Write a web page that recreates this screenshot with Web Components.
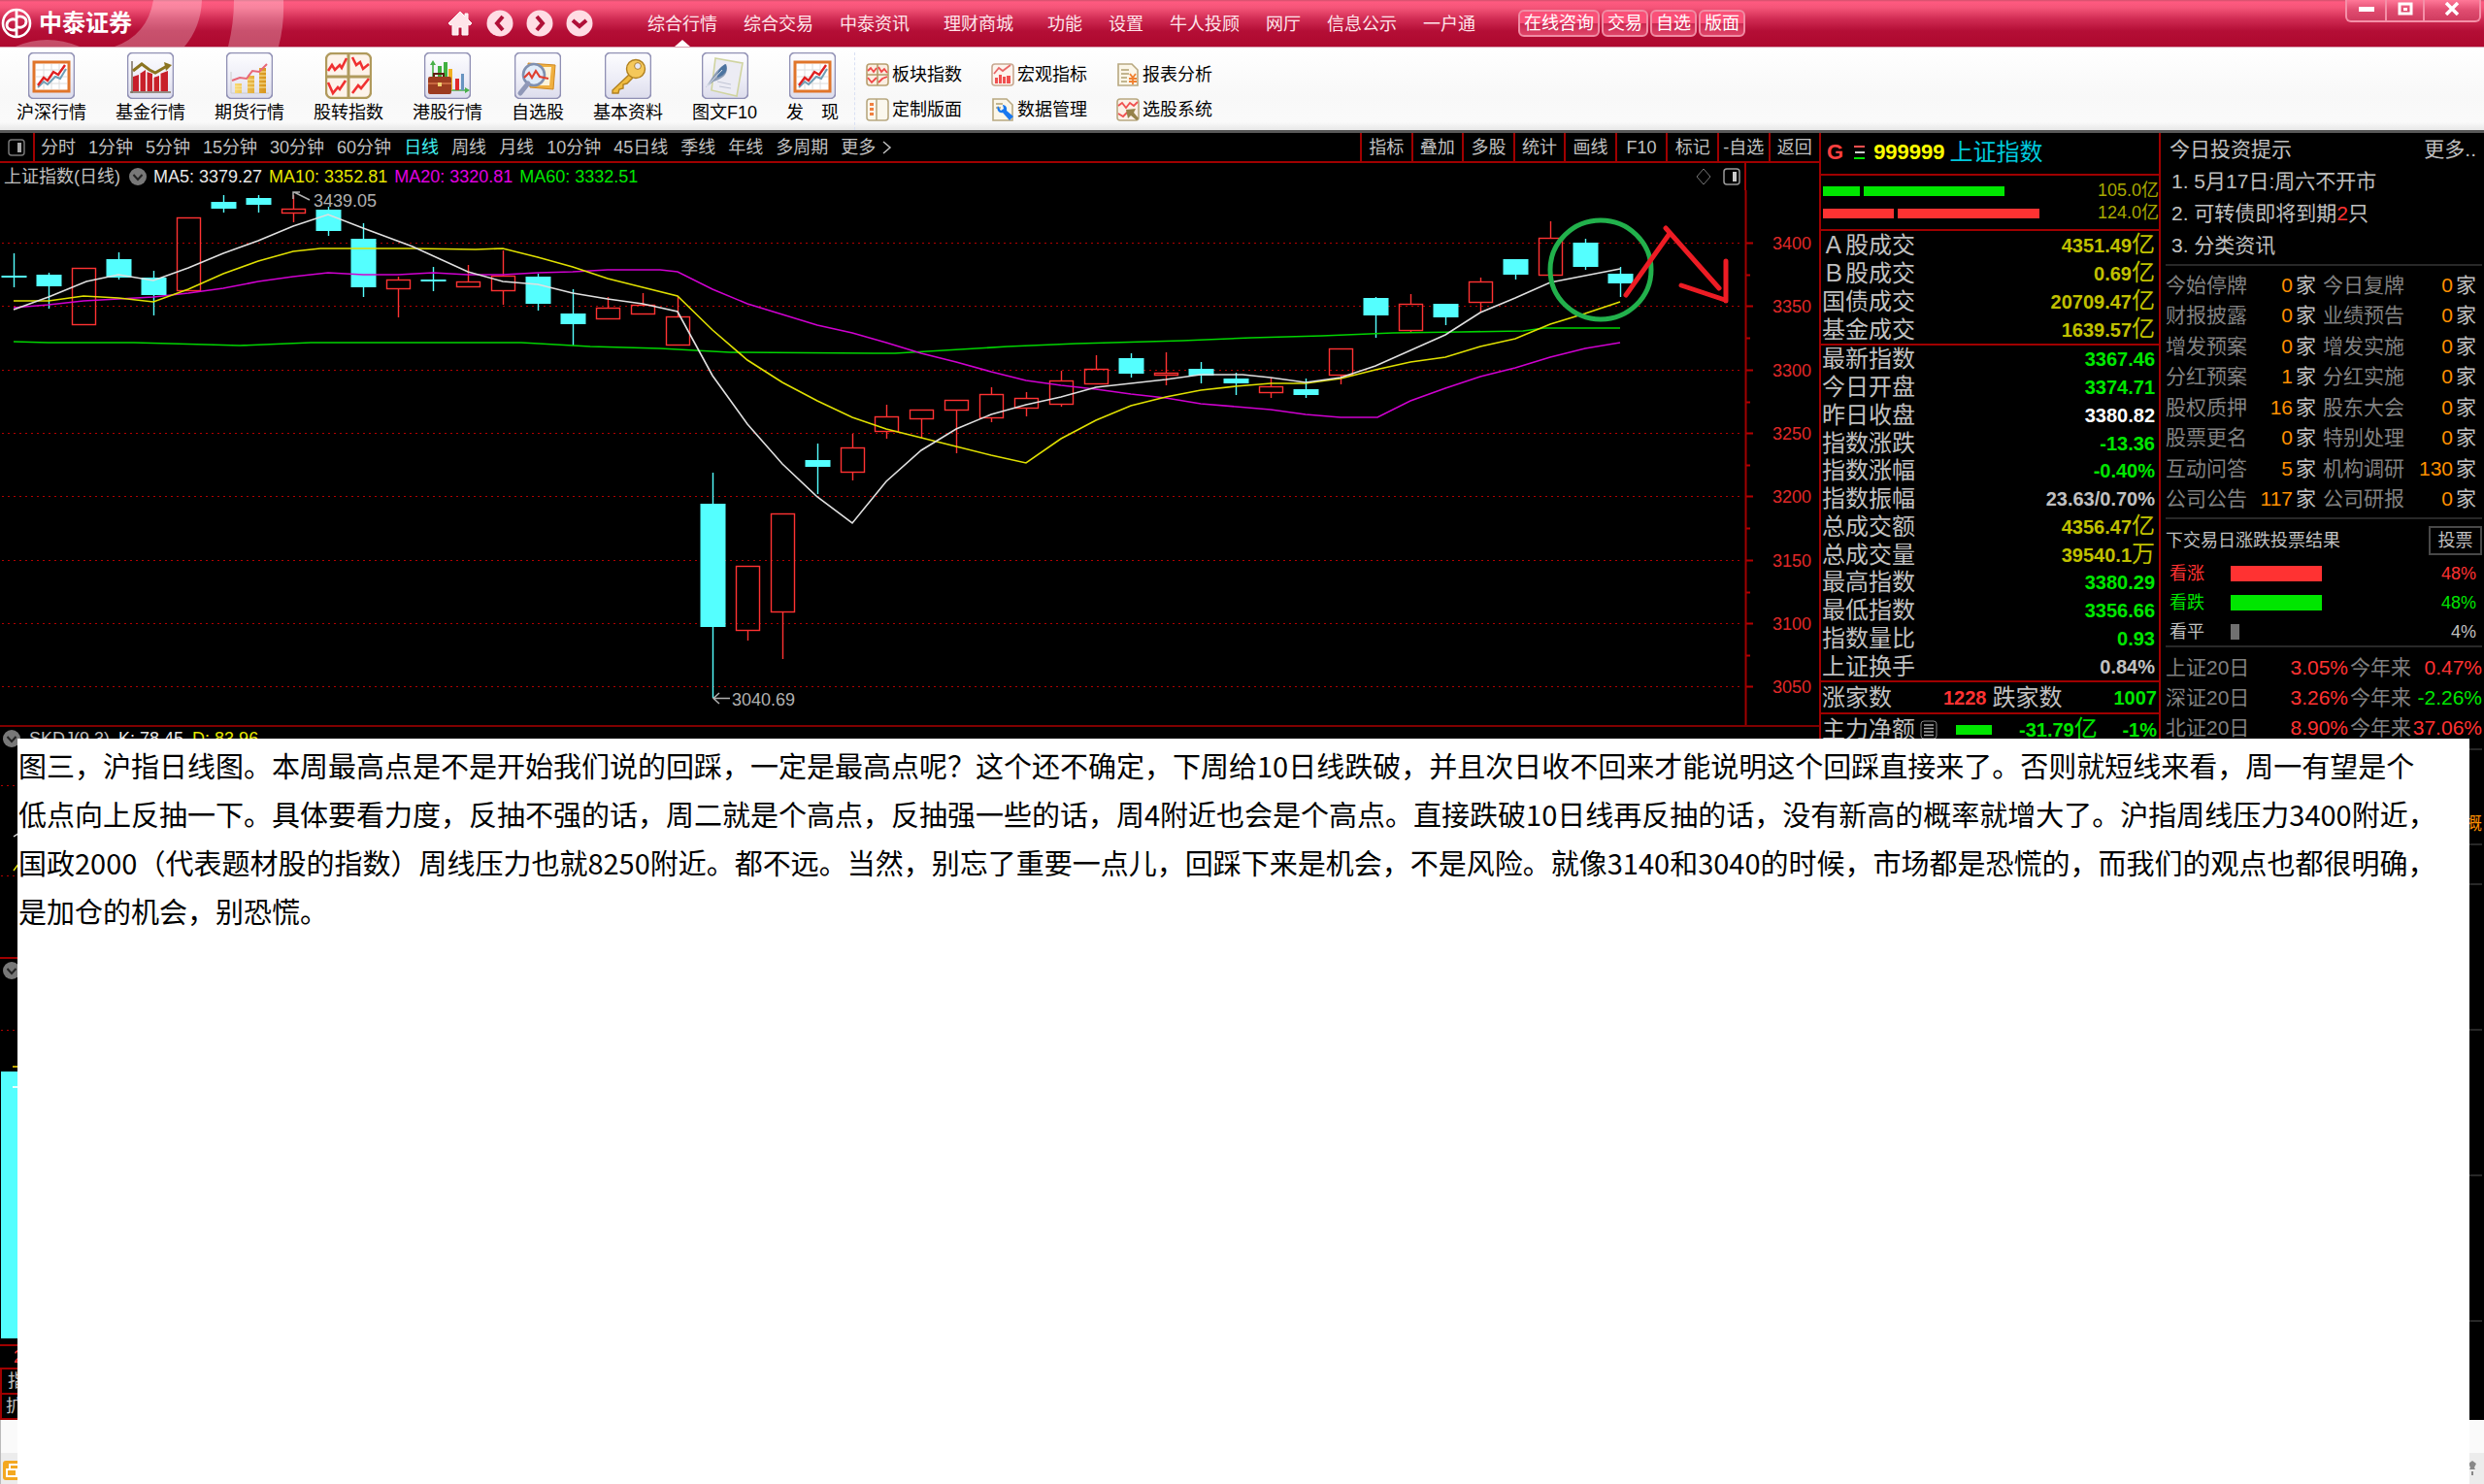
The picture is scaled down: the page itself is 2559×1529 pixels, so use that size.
<!DOCTYPE html>
<html lang="zh-CN">
<head>
<meta charset="utf-8">
<title>中泰证券</title>
<style>
  html, body { margin: 0; height: 100%; background: #000; }
  body { font-family: "Liberation Sans", "Noto Sans CJK SC", sans-serif; font-size: 18px; line-height: 24px; color: #c0c0c0; }
</style>
</head>
<body>
<trading-app></trading-app>
<script>
const BASE = `<style>
  :host { display: block; box-sizing: border-box; }
  *, *::before { box-sizing: border-box; }
  button { font: inherit; color: inherit; background: none; border: 0; padding: 0; margin: 0; white-space: nowrap; }
  a { color: inherit; text-decoration: none; white-space: nowrap; }
  svg { display: block; }
  table { border-collapse: collapse; width: 100%; }
  td, th { padding: 0; font-weight: inherit; text-align: left; white-space: nowrap; }
  .g { color: #00e600; } .r { color: #ff3232; } .y { color: #c0c000; } .w { color: #fff; }
</style>`;
function define(name, html) {
  customElements.define(name, class extends HTMLElement {
    constructor() {
      super();
      const t = document.createElement('template');
      t.innerHTML = BASE + (typeof html === 'function' ? html(this) : html);
      this.attachShadow({ mode: 'open' }).append(t.content.cloneNode(true));
    }
  });
}

/* ---------- icon drawings ---------- */
const frame = '<rect x=".5" y=".5" width="47" height="47" rx="5" fill="url(#fr)" stroke="#9090b4" stroke-width="1.6"/>';
const defs = '<defs><linearGradient id="fr" x2="0" y2="1"><stop offset="0" stop-color="#fdfdff"/><stop offset=".6" stop-color="#ececf6"/><stop offset="1" stop-color="#dcdcec"/></linearGradient><linearGradient id="gd" x2="1"><stop offset="0" stop-color="#f8d870"/><stop offset="1" stop-color="#d8951c"/></linearGradient></defs>';
const board = '<rect x="6" y="10" width="36" height="30" fill="#fff" stroke="#e0752a" stroke-width="3"/><path d="M8 18H40M8 25H40M8 32H40M16 12V38M24 12V38M32 12V38" stroke="#dcdcdc"/><path d="M10 36l6-6 4 3 8-8 5 2 6-10" fill="none" stroke="#6f9db5" stroke-width="2"/><path d="M10 34l6-8 4 3 6-9 5 3 7-10" fill="none" stroke="#e02020" stroke-width="2.4"/>';
const ICONS = {
  board: frame + board,
  bars: frame + '<path d="M5 42V9M3 41H45" stroke="#7c7060" stroke-width="1.5"/><path d="M6 40V25l6-2v17zM13 40V22l6-4v22zM20 40V20l6 2v18zM27 40V26l6-2v16zM34 40V22l8-3v21z" fill="#c8202a"/><path d="M13 40V22M20 40V20M27 40V25M34 40V22" stroke="#fff"/><path d="M6 19l9-7 8 6 6 3 12-7" fill="none" stroke="#8b7420" stroke-width="3"/><path d="M38 10l8 3-6 6z" fill="#8b7420"/>',
  coins: frame + '<path d="M5 42V20M5 42H44" stroke="#ccc"/><path d="M9 42V32h7v10zM22 42V24h7v18zM34 42V16h7v26z" fill="url(#gd)"/><path d="M9 35h7M9 38h7M22 28h7M22 32h7M22 36h7M34 20h7M34 24h7M34 28h7M34 32h7M34 36h7" stroke="#fbe9a5"/><path d="M6 29l8-3 7 1 6-8 7 1 8-8" fill="none" stroke="#e86878" stroke-width="2"/>',
  quad: '<rect x="1" y="1" width="46" height="46" rx="6" fill="#fdf3ea" stroke="#b09a5c" stroke-width="2.4"/><path d="M24 1V47M1 25H47" stroke="#b09a5c" stroke-width="3"/><path d="M3 19l4-6 3 5 5-5 2 3 5-10M28 5l4 8 4-3 3 7 6-5M3 31l5 11 5-6 2 2 6-9M28 42l6-8 3 3 8-10" fill="none" stroke="#f03030" stroke-width="2.6"/>',
  bag: frame + '<path d="M9 40V12M5 39H44" stroke="#48b048" stroke-width="1.6"/><path d="M6 13l3-5 3 5zM42 36l5 3-5 3z" fill="#48b048"/><path d="M14 26V14h4v12zM20 26V10h4v16z" fill="#40b040"/><path d="M25 26V17h4v22h-4z" fill="#f0b020"/><path d="M32 39V27h4v12z" fill="#e02828"/><path d="M38 39V22h3v17z" fill="#6894c0"/><path d="M10 25v-3h10v3" fill="none" stroke="#5c2010" stroke-width="2"/><rect x="4" y="25" width="24" height="18" rx="2" fill="#9c3c20"/><path d="M4 32h24" stroke="#c86840" stroke-width="2"/><rect x="14" y="31" width="4" height="4" fill="#f0d070"/>',
  lens: frame + '<path d="M14 11l28 2-2 25-24-2z" fill="#f0b040" stroke="#d08820"/><path d="M17 15h21l-2 19H18z" fill="#fdf3d8"/><circle cx="20" cy="23" r="11" fill="#e0ecfa" stroke="#8090b0" stroke-width="2.6"/><path d="M10 26l5-5 3 5 4-7 4 6 9 2" fill="none" stroke="#e04030" stroke-width="2.2"/><path d="M14 32L6 42" stroke="#9098b8" stroke-width="5" stroke-linecap="round"/>',
  key: frame + '<path d="M26 22L8 39v3h6l1-4 4-1v-4l4-1 6-6" fill="#f0bc40" stroke="#b08020" stroke-width="1.4"/><circle cx="32" cy="17" r="9.5" fill="#f5c85a" stroke="#b08020" stroke-width="1.4"/><circle cx="34" cy="14" r="3.4" fill="#e8e8f4" stroke="#b08020"/>',
  quill: frame + '<path d="M14 6l28 5-6 34-26-6z" fill="#ececf4" stroke="#d0d4a0" stroke-width="1.6"/><path d="M16 30l14 3M18 35l12 2" stroke="#c0c4d4"/><path d="M4 36c6-8 10-18 20-24 4 6 2 14-12 18z" fill="#8c9cb4"/><path d="M16 26c0-8 4-12 9-14 2 6 0 11-9 14z" fill="#4c74a0"/><path d="M5 35L21 18" stroke="#e0e4ec"/>',
  s1: '<rect x="1" y="1" width="22" height="22" rx="3" fill="#fbeee2" stroke="#b8a070" stroke-width="1.6"/><path d="M12 1V23M1 12H23" stroke="#b09a68" stroke-width="1.6"/><path d="M2 8l3-3 3 4 3-4M13 4l3 5 3-3 3 4M2 15l4 5 5-5M13 20l4-4 5-2" fill="none" stroke="#f04848" stroke-width="1.8"/>',
  s2: '<rect x="1" y="1" width="22" height="22" rx="3" fill="#fdf4ee" stroke="#c8a890" stroke-width="1.6"/><path d="M4 21v-6h3v6zM8 21v-9h3v9zM12 21v-7h3v7zM16 21v-8h4v8z" fill="#f05050"/><path d="M3 11l5-6 4 3 8-6" fill="none" stroke="#e86868" stroke-width="1.8"/>',
  s3: '<path d="M2 1h14l6 6v16H2z" fill="#fbf6e8" stroke="#b8a880" stroke-width="1.6"/><path d="M5 7h8M5 11h8M5 15h6M5 19h6" stroke="#b0a070" stroke-width="1.6"/><path d="M14 11l3 4 3-4M17 15v7M13 16h8M13 19h8" fill="none" stroke="#f08030" stroke-width="1.8"/>',
  s4: '<rect x="1" y="1" width="22" height="22" rx="3" fill="#fbf8ee" stroke="#b8a880" stroke-width="1.6"/><path d="M11 1V23" stroke="#b8a880" stroke-width="1.6"/><path d="M4 5h4v3H4zM4 10h4v3H4zM4 15h4v3H4z" fill="#f08040"/>',
  s5: '<path d="M2 1h14l6 6v16H2z" fill="#fbf6e8" stroke="#b8a880" stroke-width="1.6"/><path d="M5 6h7M5 10h5" stroke="#b0a070" stroke-width="1.6"/><path d="M7 8c-2 5 2 8 5 7l7 8 4-4-7-6c1-4-2-6-4-6l1 4-3 2z" fill="#1878f0"/>',
  s6: '<rect x="1" y="1" width="22" height="22" rx="3" fill="#fbf0e8" stroke="#b8a880" stroke-width="1.6"/><path d="M2 8l4-3 4 5 4-5 4 3 4-4M2 16l5 3 5-5" fill="none" stroke="#f05050" stroke-width="1.8"/><path d="M10 12l10-1-2 4 5 6-2 2-6-5-3 3z" fill="#96824a"/>'
};

define('tool-icon', el => {
  const n = el.getAttribute('name'), s = n[0] === 's' ? 24 : 48;
  return `<svg width="${s}" height="${s}" viewBox="0 0 ${s} ${s}">${defs}${ICONS[n]}</svg>`;
});
define('tool-button', el => `<style>
  button { display: flex; flex-direction: column; align-items: center; gap: 2px; color: #000; }
</style><button><tool-icon name="${el.getAttribute('icon')}"></tool-icon><slot></slot></button>`);
define('tool-link', el => `<style>
  button { display: flex; align-items: center; gap: 3px; color: #000; }
</style><button><tool-icon name="${el.getAttribute('icon')}"></tool-icon><slot></slot></button>`);
define('round-chevron', `<svg width="18" height="18" viewBox="0 0 18 18"><circle cx="9" cy="9" r="9" fill="#787878"/><path d="M4.500 7L9 12l4.500-5" fill="none" stroke="#222" stroke-width="2"/></svg>`);

/* ---------- title bar ---------- */
define('menu-link', `<style>
  a { display: block; position: relative; height: 48px; line-height: 50px; color: #ffe4ea; }
  :host([current]) a::before { content: ""; position: absolute; left: 50%; bottom: 0; margin-left: -8px; border: 8px solid transparent; border-top: 0; border-bottom: 7px solid #fff; }
  :host([wide]) { margin-inline: 8px; }
</style><a href="#"><slot></slot></a>`);
define('pill-button', `<style>
  button { display: block; height: 28px; padding: 0 4px; border: 2px solid #f08ca4; border-radius: 6px; line-height: 24px; color: #fff;
    background: linear-gradient(#fa5078 0 50%, #c82850 50%, #e04468); }
</style><button><slot></slot></button>`);
define('title-bar', `<style>
  :host { display: flex; align-items: center; position: relative; height: 49px; border-bottom: 1px solid #d8a0b0;
    background: linear-gradient(#d0506c 0, #ff5a80 2px, #f45478 8px, #cf2a52 20px, #b40e36 32px, #ae082e 100%); }
  .swoosh { position: absolute; left: 0; top: 0; }
  .logo { position: relative; display: flex; align-items: center; gap: 7px; width: 460px; color: #fff; font-size: 24px; font-weight: 700; line-height: 48px; }
  .nav { display: flex; gap: 13px; width: 207px; }
  nav { display: flex; gap: 27px; }
  .pills { display: flex; gap: 2px; margin-left: 44px; }
  .win { display: flex; align-self: flex-start; margin-left: auto; margin-right: 3px; height: 23px; border: 2px solid #f490a8; border-top: 0; border-radius: 0 0 6px 6px; background: linear-gradient(#ff7898, #e04c70 50%, #d03c60); }
  .win button { display: grid; place-items: center; width: 39px; height: 21px; padding-bottom: 3px; }
  .win button + button { border-left: 2px solid #f490a8; }
  .win button:last-child { width: 58px; }
</style>
<svg class="swoosh" width="300" height="48" viewBox="0 0 300 48"><g fill="#fff" fill-opacity=".28"><path d="M158 0H208Q207 28 190 48H118Q152 36 158 0z"/><path d="M241 0H292Q293 26 287 48H235Q241 24 241 0z"/><path d="M16 48Q48 34 82 48z"/></g></svg>
<div class="logo"><svg width="33" height="32" viewBox="0 0 33 32"><g fill="none" stroke="#fff" stroke-width="2.600"><circle cx="17" cy="16" r="14"/><path d="M17 2V30M17 22c-3 2-10 1-10-4s6-8 10-5v6c4 3 10 0 10-5s-7-6-10-4" stroke-width="2.800"/></g></svg>中泰证券</div>
<div class="nav">
 <button aria-label="主页"><svg width="28" height="28" viewBox="0 0 28 28"><path d="M14 2L2 14l2 2 2-1v11h6v-8h4v8h6V15l2 1 2-2-4-4V4h-3v3z" fill="#ffe4ea" stroke="#fff"/></svg></button>
 <button aria-label="后退"><svg width="28" height="28" viewBox="0 0 28 28"><circle cx="14" cy="14" r="13.500" fill="#ffdce4"/><path d="M17 7l-6 7 6 7" fill="none" stroke="#b01038" stroke-width="4"/></svg></button>
 <button aria-label="前进"><svg width="28" height="28" viewBox="0 0 28 28"><circle cx="14" cy="14" r="13.500" fill="#ffdce4"/><path d="M11 7l6 7-6 7" fill="none" stroke="#b01038" stroke-width="4"/></svg></button>
 <button aria-label="展开"><svg width="28" height="28" viewBox="0 0 28 28"><circle cx="14" cy="14" r="13.500" fill="#ffdce4"/><path d="M7 11l7 6 7-6" fill="none" stroke="#b01038" stroke-width="4"/></svg></button>
</div>
<nav><menu-link current>综合行情</menu-link><menu-link>综合交易</menu-link><menu-link>中泰资讯</menu-link><menu-link wide>理财商城</menu-link><menu-link>功能</menu-link><menu-link>设置</menu-link><menu-link>牛人投顾</menu-link><menu-link>网厅</menu-link><menu-link>信息公示</menu-link><menu-link>一户通</menu-link></nav>
<div class="pills"><pill-button>在线咨询</pill-button><pill-button>交易</pill-button><pill-button>自选</pill-button><pill-button>版面</pill-button></div>
<div class="win">
 <button aria-label="最小化"><svg width="16" height="16" viewBox="0 0 16 16"><rect x="0" y="6" width="16" height="5" fill="#fff"/></svg></button>
 <button aria-label="还原"><svg width="16" height="14" viewBox="0 0 16 14"><rect x="2" y="2" width="12" height="10" fill="none" stroke="#fff" stroke-width="3"/><rect x="6" y="6" width="4" height="3" fill="#fff"/></svg></button>
 <button aria-label="关闭"><svg width="16" height="14" viewBox="0 0 16 14"><path d="M2 1l12 12M14 1L2 13" stroke="#fff" stroke-width="3.500"/></svg></button>
</div>`);

/* ---------- toolbar ---------- */
define('tool-bar', `<style>
  :host { display: flex; height: 88px; padding: 5px 17px 0; border-bottom: 3px solid #585858; background: linear-gradient(#fff, #f8f8f8 60%, #fafafa 90%, #e8e8e8); }
  .big { display: flex; gap: 30px; }
  .small { display: grid; grid-template-columns: repeat(3, 98px); gap: 12px 31px; align-content: start; margin-left: 16px; padding: 11px 0 0 11px; border-left: 1px dashed #d8e0f4; }
</style>
<div class="big"><tool-button icon="board">沪深行情</tool-button><tool-button icon="bars">基金行情</tool-button><tool-button icon="coins">期货行情</tool-button><tool-button icon="quad">股转指数</tool-button><tool-button icon="bag">港股行情</tool-button><tool-button icon="lens">自选股</tool-button><tool-button icon="key">基本资料</tool-button><tool-button icon="quill">图文F10</tool-button><tool-button icon="board">发　现</tool-button></div>
<div class="small"><tool-link icon="s1">板块指数</tool-link><tool-link icon="s2">宏观指标</tool-link><tool-link icon="s3">报表分析</tool-link><tool-link icon="s4">定制版面</tool-link><tool-link icon="s5">数据管理</tool-link><tool-link icon="s6">选股系统</tool-link></div>`);

/* ---------- chart column ---------- */
const periods = ['分时','1分钟','5分钟','15分钟','30分钟','60分钟','日线','周线','月线','10分钟','45日线','季线','年线','多周期','更多'];
const tabs = ['指标','叠加','多股','统计','画线','F10','标记','-自选','返回'];
define('period-bar', `<style>
  :host { display: flex; height: 31px; border-bottom: 2px solid #a00000; }
  .side { display: grid; place-items: center; width: 36px; border-right: 2px solid #a00000; }
  .p { display: flex; align-items: center; gap: 13px; padding-left: 6px; }
  .on { color: #40f0f0; }
  .t { display: flex; margin-left: auto; width: 473px; }
  .t button { flex: 1; border-left: 2px solid #a00000; }
</style>
<button class="side" aria-label="侧栏"><svg width="18" height="18" viewBox="0 0 18 18"><rect x="1" y="1" width="16" height="16" rx="3" fill="none" stroke="#777" stroke-width="1.500"/><rect x="10" y="4" width="4" height="10" fill="#aaa"/></svg></button>
<div class="p">${periods.map(p => `<button${p === '日线' ? ' class="on"' : ''}>${p}</button>`).join('')}<svg style="margin-left:-6px" width="10" height="14" viewBox="0 0 10 14"><path d="M1 1l7 6-7 6" fill="none" stroke="#c0c0c0" stroke-width="1.500"/></svg></div>
<div class="t">${tabs.map(p => `<button>${p}</button>`).join('')}</div>`);

define('chart-head', `<style>
  :host { display: flex; align-items: center; height: 28px; padding-left: 4px; }
  .ma { display: flex; gap: 7px; padding-left: 7px; }
  round-chevron { margin-left: 9px; }
  .tools { display: flex; gap: 12px; margin-left: auto; padding-right: 4px; }
  .axis { width: 77px; height: 28px; border-left: 2px solid #a00000; }
</style>
<span>上证指数(日线)</span><round-chevron></round-chevron>
<div class="ma"><span style="color:#e8e8e8">MA5: 3379.27</span><span style="color:#e6e600">MA10: 3352.81</span><span style="color:#e000e0">MA20: 3320.81</span><span style="color:#00e600">MA60: 3332.51</span></div>
<div class="tools"><svg width="16" height="18" viewBox="0 0 16 18"><path d="M8 1l7 8-7 8-7-8z" fill="none" stroke="#777"/></svg><svg width="18" height="18" viewBox="0 0 18 18"><rect x="1" y="1" width="16" height="16" rx="3" fill="none" stroke="#999" stroke-width="1.500"/><rect x="10" y="4" width="4" height="10" fill="#ccc"/></svg></div>
<div class="axis"></div>`);

/* each candle: colour, high, body top, body bottom, low */
const candles = [
 ['c',261,284,285,296],['c',281,283,294,318],['r',276,276,334,334],['c',260,267,285,288],['c',279,286,303,325],['r',224,224,299,299],
 ['c',201,208,214,219],['c',201,204,210,219],['r',201,215,219,229],['c',213,216,237,243],['c',230,246,295,306],['r',285,288,297,327],
 ['c',275,288,289,300],['r',273,290,295,295],['r',258,284,299,314],['c',282,285,312,320],['c',298,323,333,356],['r',306,317,328,328],
 ['r',302,314,323,323],['r',305,326,355,355],['c',487,519,645,719],['r',583,583,649,660],['r',529,529,630,679],['c',457,474,480,509],
 ['r',447,461,486,495],['r',417,429,444,452],['r',422,422,431,451],['r',412,412,422,467],['r',399,406,430,435],['r',404,410,420,429],
 ['r',382,392,416,419],['r',366,380,395,395],['c',364,369,384,389],['r',363,384,386,397],['c',373,380,386,395],['c',384,390,394,407],
 ['r',389,398,404,410],['c',390,401,406,410],['r',359,359,386,396],['c',306,307,324,348],['r',303,313,340,343],['c',313,313,326,335],
 ['r',286,290,311,322],['c',267,267,282,288],['r',228,245,283,283],['c',246,250,274,278],['c',275,282,291,306]];
const lines = {
 '#00d400': '14,352 50,353 138,353 212,355 247,356 320,353 537,353 608,357 680,359 752,363 900,364 922,364 1038,357 1109,354 1218,351 1289,348 1362,346 1435,343 1505,342 1569,341 1591,338 1669,338',
 '#d000d0': '14,317 50,314 86,310 122,308 158,306 194,302 230,297 266,290 302,285 338,281 374,283 410,283 446,281 482,283 518,283 554,281 590,280 626,278 680,278 698,280 734,298 770,313 806,324 842,335 878,343 913,353 949,364 985,373 1021,383 1057,392 1093,397 1129,401 1165,406 1201,410 1237,416 1273,419 1309,422 1345,427 1381,430 1419,430 1453,413 1489,400 1525,388 1561,379 1597,368 1633,359 1669,353',
 '#e0e000': '14,310 50,310 86,305 122,307 158,311 194,298 230,282 266,269 302,259 330,256 425,256 490,257 518,256 554,265 590,275 626,287 662,296 698,305 734,340 770,371 806,394 842,413 878,430 913,442 949,451 985,460 1021,469 1057,477 1093,452 1129,433 1165,418 1201,409 1237,402 1273,398 1309,395 1345,395 1381,390 1417,381 1453,373 1489,368 1525,357 1561,349 1597,334 1633,323 1669,311',
 '#e0e0e0': '14,319 50,306 89,290 122,283 158,289 194,276 230,261 266,248 302,233 338,221 374,235 425,254 482,280 518,290 554,293 590,302 626,308 662,313 698,321 734,387 770,437 806,478 842,512 878,539 913,496 949,464 985,442 1021,427 1057,417 1093,409 1129,399 1165,395 1201,391 1237,386 1280,386 1309,389 1345,394 1381,389 1417,377 1453,361 1489,345 1525,322 1561,307 1597,291 1633,284 1669,277'
};
define('k-chart', () => {
  let s = '';
  for (let i = 0; i < 8; i++) {
    const y = Math.round(250 + i * 65.3) + .5;
    s += `<path d="M2 ${y}H1796" stroke="#b40000" stroke-dasharray="2 4"/><path d="M1798 ${y}h8" stroke="#b40000" stroke-width="2"/>`;
    if (i < 7) s += `<path d="M1798 ${y + 33}h5" stroke="#b40000" stroke-width="2"/>`;
    s += `<text x="1866" y="${y + 6}" text-anchor="end" fill="#e02828">${3400 - i * 50}</text>`;
  }
  candles.forEach(([c, h, a, b, l], i) => {
    const x = 14 + i * 36 - (i > 24 ? 1 : 0) + .5, col = c === 'c' ? '#54ffff' : '#ff3232';
    s += `<path d="M${x} ${h}V${a}M${x} ${b}V${l}" stroke="${col}" stroke-width="1.4"/>`;
    s += c === 'c' ? `<rect x="${x - 13}" y="${a}" width="26" height="${b - a + 1}" fill="${col}"/>`
                   : `<rect x="${x - 12}" y="${a + .5}" width="24" height="${b - a}" fill="none" stroke="${col}" stroke-width="1.4"/>`;
  });
  for (const c in lines) s += `<polyline points="${lines[c]}" fill="none" stroke="${c}" stroke-width="1.6"/>`;
  return `<style>svg { width: 100%; height: auto; font-size: 18px; }</style>
<svg viewBox="0 196 1874 551">${s}
<path d="M1798.500 196V747" stroke="#a00000" stroke-width="2"/>
<g fill="#b0b0b0"><text x="323" y="213">3439.05</text><text x="754" y="727">3040.69</text></g>
<path d="M319 206l-16-8M302 205v-7h7M752 719.500H735M741 714l-6 5.500 6 5.500" fill="none" stroke="#b0b0b0" stroke-width="1.500"/>
<ellipse cx="1649" cy="278" rx="52" ry="51" fill="none" stroke="#22b14c" stroke-width="5"/>
<path d="M1675 304L1719 242M1716 235L1771 297M1778 269V310M1732 294L1777 309" fill="none" stroke="#ed1c24" stroke-width="5" stroke-linecap="round"/>
</svg>`;
});

define('sub-charts', `<style>
  :host { display: flex; flex-direction: column; }
  .k { height: 239px; border-top: 2px solid #800000; }
  .v { height: 399px; border-top: 2px solid #a00000; }
  .h { display: flex; align-items: center; gap: 9px; height: 24px; padding-left: 3px; line-height: 20px; }
  .d { height: 24px; border-top: 2px solid #a00000; padding-left: 14px; line-height: 22px; color: #ff3232; }
  .t { height: 26px; border: solid #a00000; border-width: 2px 0 0 2px; padding-left: 6px; line-height: 24px; }
  .t.e { border-bottom-width: 2px; height: 28px; padding-left: 4px; }
</style>
<div class="k"><div class="h"><round-chevron></round-chevron><span>SKDJ(9,3)</span><span style="color:#e8e8e8">K: 78.45</span><span style="color:#e6e600">D: 83.96</span></div>
<svg width="20" height="140" viewBox="0 772 20 140"><path d="M1 808.500H20M1 901.500H20" stroke="#b40000" stroke-dasharray="2 4"/><path d="M14 861l6-4" stroke="#e0e0e0" stroke-width="1.500"/><path d="M14 896l6-8" stroke="#e0e000" stroke-width="1.500"/></svg></div>
<div class="v"><div class="h"><round-chevron></round-chevron></div>
<svg width="20" height="372" viewBox="0 1012 20 372"><path d="M1 1061.500H20" stroke="#b40000" stroke-dasharray="2 4"/><rect x="1" y="1104" width="19" height="275" fill="#54ffff"/><path d="M13 1099H20" stroke="#c0a800" stroke-width="2"/><path d="M13 1120H20" stroke="#e8ffff" stroke-width="2"/></svg></div>
<div class="d">2</div><div class="t">指</div><div class="t e">扩</div>`);
define('chart-column', `<style>:host { flex: 1; min-width: 0; }</style><period-bar></period-bar><chart-head></chart-head><k-chart></k-chart><sub-charts></sub-charts>`);

/* ---------- quote panel ---------- */
const row = (l, v, c, u = '') => `<tr><th>${l}</th><td class="${c}">${v}${u && `<span>${u}</span>`}</td></tr>`;
define('quote-panel', `<style>
  :host { width: 352px; border: solid #a00000; border-width: 0 2px; font-size: 24px; line-height: 28px; }
  .title { display: flex; align-items: center; height: 42px; padding: 0 0 3px 6px; font-weight: 700; font-size: 22px; }
  .title b { color: #ff0; margin: 0 5px 0 8px; } .title span { color: #00c8dc; font-size: 24px; font-weight: 400; }
  .title svg { margin-left: 10px; }
  .line { border-top: 2px solid #a00000; }
  .flow { display: grid; grid-template-columns: 1fr auto; align-content: start; height: 57px; padding: 4px 0 0 2px; color: #a8a800; font-size: 18px; line-height: 23px; }
  .flow div { display: flex; gap: 4px; align-items: center; }
  .flow i, .main i { height: 10px; background: #00e600; } .flow .red i { background: #ff3232; }
  .a, .b { height: 118px; overflow: hidden; }
  .b { height: 347px; }
  table { height: 100%; line-height: 24px; }
  th { padding-left: 1px; }
  td { text-align: right; padding-right: 4px; font-size: 20px; font-weight: 700; }
  td span { font-size: 24px; line-height: 20px; font-weight: 400; }
  .box { border-top: 2px solid #a00000; padding: 0 2px 0 1px; }
  .two { display: grid; grid-template-columns: 72px 1fr 72px 1fr; column-gap: 6px; height: 33px; align-items: center; }
  .two b, .main b { font-size: 20px; text-align: right; }
  .main { display: flex; align-items: center; height: 33px; }
  .main b span { font-size: 24px; line-height: 20px; font-weight: 400; }
</style>
<div class="title"><span style="color:#ff4040;font-size:22px;font-weight:700">G</span><svg width="13" height="16" viewBox="0 0 13 16"><path d="M1 2h11" stroke="#ff5050" stroke-width="2"/><path d="M2 8h10" stroke="#ccc" stroke-width="2"/><path d="M1 14h11" stroke="#00e600" stroke-width="2"/></svg><b>999999</b><span>上证指数</span></div>
<div class="line flow"><div><i style="width:38px"></i><i style="width:145px"></i></div>105.0亿<div class="red"><i style="width:73px"></i><i style="width:146px"></i></div>124.0亿</div>
<div class="line a"><table>${row('Ａ股成交','4351.49','y','亿')}${row('Ｂ股成交','0.69','y','亿')}${row('国债成交','20709.47','y','亿')}${row('基金成交','1639.57','y','亿')}</table></div>
<div class="line b"><table>${row('最新指数','3367.46','g')}${row('今日开盘','3374.71','g')}${row('昨日收盘','3380.82','w')}${row('指数涨跌','-13.36','g')}${row('指数涨幅','-0.40%','g')}${row('指数振幅','23.63/0.70%','')}${row('总成交额','4356.47','y','亿')}${row('总成交量','39540.1','y','万')}${row('最高指数','3380.29','g')}${row('最低指数','3356.66','g')}${row('指数量比','0.93','g')}${row('上证换手','0.84%','')}</table></div>
<div class="box two"><span>涨家数</span><b class="r">1228</b><span>跌家数</span><b class="g">1007</b></div>
<div class="box main"><span>主力净额</span><svg style="margin-left:5px" width="18" height="20" viewBox="0 0 18 20"><rect x="1" y="1" width="16" height="18" rx="3" fill="none" stroke="#888"/><path d="M4 5h10M4 8.500h10M4 12h10M4 15.500h10" stroke="#aaa" stroke-width="1.500"/></svg><i style="width:37px;margin-left:19px"></i><b class="g" style="margin-left:28px">-31.79<span>亿</span></b><b class="g" style="margin-left:auto">-1%</b></div>`);

/* ---------- information panel ---------- */
const fac = [['今始停牌',0,'今日复牌',0],['财报披露',0,'业绩预告',0],['增发预案',0,'增发实施',0],['分红预案',1,'分红实施',0],['股权质押',16,'股东大会',0],['股票更名',0,'特别处理',0],['互动问答',5,'机构调研',130],['公司公告',117,'公司研报',0]];
const perf = [['上证','3.05%','0.47%','r'],['深证','3.26%','-2.26%','g'],['北证','8.90%','37.06%','r']];
define('info-panel', `<style>
  :host { width: 333px; padding: 0 2px 0 5px; font-size: 21px; line-height: 33px; position: relative; }
  .head { display: flex; justify-content: space-between; padding: 0 6px 0 4px; }
  ol { margin: 0; padding: 0 0 0 6px; list-style: none; }
  hr { border: 0; border-top: 2px solid #282828; margin: 0; }
  .f { height: 252px; margin: 4px 0 3px; line-height: 26px; }
  .f th, .p th { color: #808080; } .f td { text-align: right; } .f span { color: #ff9000; margin-right: 3px; }
  .vh { display: flex; justify-content: space-between; align-items: center; height: 44px; font-size: 18px; }
  .vh button { width: 55px; height: 30px; border: 2px solid #484848; line-height: 24px; }
  .votes { display: grid; grid-template-columns: 63px 1fr auto; grid-auto-rows: 30px; align-items: center; height: 86px; align-content: center; padding: 0 6px 2px 4px; font-size: 18px; line-height: 24px; }
  .votes i { height: 16px; } .votes b { font-weight: 400; text-align: right; }
  .p { margin-top: 5px; table-layout: fixed; } .p tr { height: 31px; line-height: 31px; } .p td { text-align: right; }
  .rest { position: absolute; left: 5px; right: 2px; top: 634px; }
  .rest div { border-top: 2px solid #282828; }
  .rest .o { height: 98px; padding-top: 60px; text-align: right; color: #ff9000; font-size: 18px; }
</style>
<div class="head"><span>今日投资提示</span><span>更多..</span></div>
<ol><li>1. 5月17日:周六不开市</li><li>2. 可转债即将到期<span class="r">2</span>只</li><li>3. 分类资讯</li></ol>
<hr style="margin-top:3px">
<table class="f">${fac.map(f => `<tr><th>${f[0]}</th><td><span>${f[1]}</span>家</td><th style="padding-left:7px">${f[2]}</th><td style="padding-right:6px"><span>${f[3]}</span>家</td></tr>`).join('')}</table>
<hr>
<div class="vh"><span>下交易日涨跌投票结果</span><button>投票</button></div>
<div class="votes"><span class="r">看涨</span><i style="width:94px;background:#ff3232"></i><b class="r">48%</b>
<span class="g">看跌</span><i style="width:94px;background:#00e600"></i><b class="g">48%</b>
<span>看平</span><i style="width:9px;background:#707070"></i><b>4%</b></div>
<hr>
<table class="p"><colgroup><col style="width:90px"><col style="width:98px"><col style="width:66px"><col></colgroup>${perf.map(p => `<tr><th>${p[0]}20日</th><td class="r">${p[1]}</td><th style="padding-left:2px">今年来</th><td class="${p[3]}">${p[2]}</td></tr>`).join('')}</table>
<div class="rest"><div class="o">概</div><div style="height:41px"></div><div style="height:150px"></div><div style="height:150px"></div><div style="height:150px"></div><div></div></div>`);

/* ---------- bottom bar and note ---------- */
define('status-bar', `<style>
  :host { height: 66px; background: linear-gradient(#fafafa 0 34px, #ececec 34px); border-left: 1px solid #bbb; }
  div { display: flex; justify-content: space-between; padding: 42px 7px 0 2px; }
</style><div><svg width="20" height="20" viewBox="0 0 20 20"><rect width="20" height="20" rx="3" fill="#f4a820"/><path d="M7 8V4h12v9M4 9h10v7H4z" fill="none" stroke="#fff" stroke-width="2"/></svg>
<svg width="10" height="16" viewBox="0 0 10 16"><path d="M5 0l4 3-2 4 1 2H2l1-2-2-4zM4 11h2v4H4z" fill="#888"/></svg></div>`);
define('note-card', `<style>
  :host { position: absolute; left: 18px; right: 15px; top: 761px; bottom: 0; background: #fff; color: #000; }
  ::slotted(p) { margin: 0; padding: 2px 0 0 1px; font: 29px/50px "Noto Sans CJK SC", sans-serif; white-space: nowrap; }
</style><slot></slot>`);

define('trading-app', `<style>
  :host { position: relative; display: flex; flex-direction: column; min-height: 100vh; overflow: hidden; }
  main { flex: 1; display: flex; align-items: stretch; }
</style>
<title-bar></title-bar><tool-bar></tool-bar>
<main><chart-column></chart-column><quote-panel></quote-panel><info-panel></info-panel></main>
<status-bar></status-bar>
<note-card><p>图三，沪指日线图。本周最高点是不是开始我们说的回踩，一定是最高点呢？这个还不确定，下周给10日线跌破，并且次日收不回来才能说明这个回踩直接来了。否则就短线来看，周一有望是个<br>低点向上反抽一下。具体要看力度，反抽不强的话，周二就是个高点，反抽强一些的话，周4附近也会是个高点。直接跌破10日线再反抽的话，没有新高的概率就增大了。沪指周线压力3400附近，<br>国政2000（代表题材股的指数）周线压力也就8250附近。都不远。当然，别忘了重要一点儿，回踩下来是机会，不是风险。就像3140和3040的时候，市场都是恐慌的，而我们的观点也都很明确，<br>是加仓的机会，别恐慌。</p></note-card>`);
</script>
</body>
</html>
